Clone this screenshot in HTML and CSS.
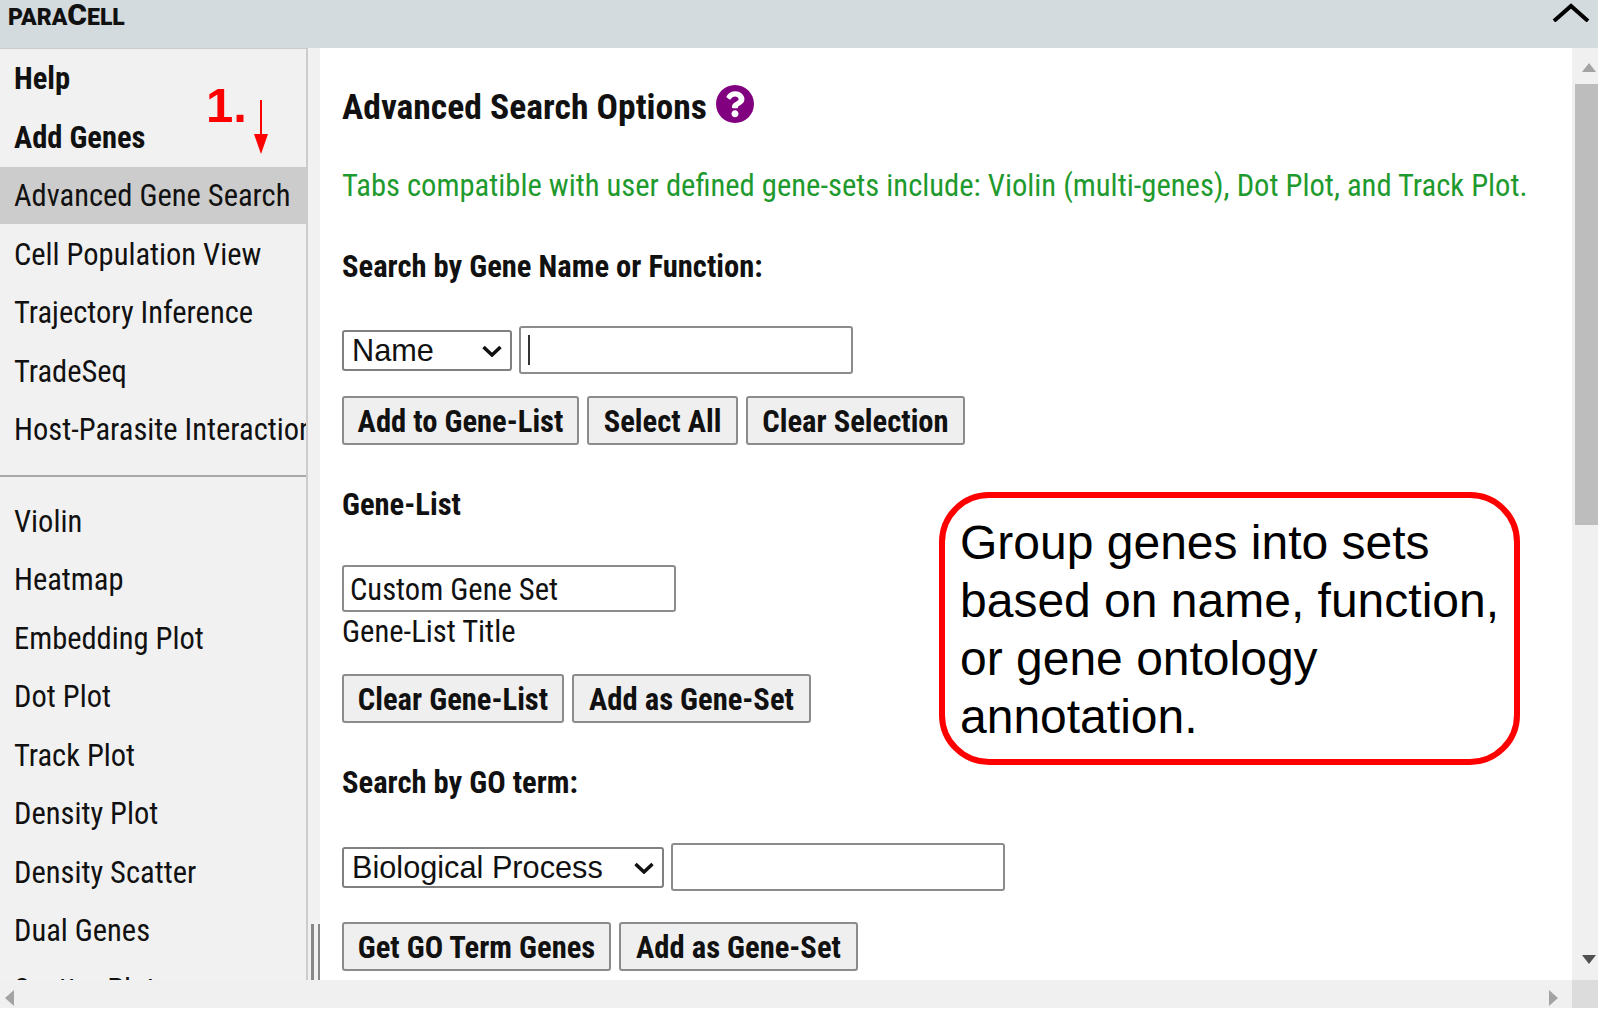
FILE: index.html
```html
<!DOCTYPE html>
<html lang="en">
<head>
    <meta charset="UTF-8">
    <meta name="viewport" content="width=device-width, initial-scale=1.0">
    <title>ParaCell</title>
    <link rel="stylesheet" href="styles.css">
</head>
<body>

    <!-- Top bar -->
    <header class="topbar">
        <div class="logo">PARA<span class="logo-big">C</span>ELL</div>
        <svg class="collapse" width="38" height="20" viewBox="0 0 38 20">
            <path d="M2 19 L19 4 L36 19" fill="none" stroke="#000" stroke-width="4"/>
        </svg>
    </header>

    <div class="workspace">
        <!-- Tab list -->
        <nav class="sidebar">
            <a class="nav-item nav-bold">Help</a>
            <a class="nav-item nav-bold">Add Genes</a>
            <a class="nav-item nav-active">Advanced Gene Search</a>
            <a class="nav-item">Cell Population View</a>
            <a class="nav-item">Trajectory Inference</a>
            <a class="nav-item">TradeSeq</a>
            <a class="nav-item">Host-Parasite Interaction</a>
            <hr class="nav-rule">
            <a class="nav-item">Violin</a>
            <a class="nav-item">Heatmap</a>
            <a class="nav-item">Embedding Plot</a>
            <a class="nav-item">Dot Plot</a>
            <a class="nav-item">Track Plot</a>
            <a class="nav-item">Density Plot</a>
            <a class="nav-item">Density Scatter</a>
            <a class="nav-item">Dual Genes</a>
            <a class="nav-item">Scatter Plot</a>
        </nav>

        <div class="gutter">
            <div class="grip"></div>
        </div>

        <!-- Search options -->
        <main class="content">
            <h2 class="title">Advanced Search Options
                <svg class="help" width="38" height="38" viewBox="8 8 496 496">
                    <path fill="#800080" d="M504 256c0 136.997-111.043 248-248 248S8 392.997 8 256C8 119.083 119.043 8 256 8s248 111.083 248 248zM262.655 90c-54.497 0-89.255 22.957-116.549 63.758-3.536 5.286-2.353 12.415 2.715 16.258l34.699 26.31c5.205 3.947 12.621 3.008 16.665-2.122 17.864-22.658 30.113-35.797 57.303-35.797 20.429 0 45.698 13.148 45.698 32.958 0 14.976-12.363 22.667-32.534 33.976C247.128 238.528 216 254.941 216 296v4c0 6.627 5.373 12 12 12h56c6.627 0 12-5.373 12-12v-1.333c0-28.462 83.186-29.647 83.186-106.667 0-58.002-60.165-102-116.531-102zM256 338c-25.365 0-46 20.635-46 46 0 25.364 20.635 46 46 46s46-20.636 46-46c0-25.365-20.635-46-46-46z"/>
                </svg>
            </h2>
            <p class="note">Tabs compatible with user defined gene-sets include: Violin (multi-genes), Dot Plot, and Track Plot.</p>

            <h3 class="label label-first">Search by Gene Name or Function:</h3>
            <div class="field-row">
                <div class="select select-name">Name<svg class="chevron" width="20" height="12" viewBox="0 0 20 12"><path d="M1.5 2 L10 10 L18.5 2" fill="none" stroke="#111" stroke-width="3.5"/></svg></div>
                <div class="text-input"><span class="caret"></span></div>
            </div>
            <div class="button-row">
                <button class="btn btn-add">Add to Gene-List</button>
                <button class="btn btn-all">Select All</button>
                <button class="btn btn-clear">Clear Selection</button>
            </div>

            <h3 class="label label-list">Gene-List</h3>
            <div class="title-input">Custom Gene Set</div>
            <div class="hint">Gene-List Title</div>
            <div class="button-row button-row-list">
                <button class="btn btn-clearlist">Clear Gene-List</button>
                <button class="btn btn-addset">Add as Gene-Set</button>
            </div>

            <h3 class="label label-go">Search by GO term:</h3>
            <div class="field-row field-row-go">
                <div class="select select-go">Biological Process<svg class="chevron" width="20" height="12" viewBox="0 0 20 12"><path d="M1.5 2 L10 10 L18.5 2" fill="none" stroke="#111" stroke-width="3.5"/></svg></div>
                <div class="text-input"></div>
            </div>
            <div class="button-row button-row-go">
                <button class="btn btn-goterm">Get GO Term Genes</button>
                <button class="btn btn-addgo">Add as Gene-Set</button>
            </div>
        </main>

        <div class="vscroll">
            <span class="arrow arrow-up"></span>
            <div class="vthumb"></div>
            <span class="arrow arrow-down"></span>
        </div>
    </div>

    <div class="hscroll">
        <span class="arrow arrow-left"></span>
        <span class="arrow arrow-right"></span>
        <div class="corner"></div>
    </div>

    <!-- Annotations drawn over the screenshot -->
    <div class="step-num">1.</div>
    <svg class="step-arrow" width="16" height="54" viewBox="0 0 16 54">
        <path d="M8 0 V36" stroke="#f00" stroke-width="2"/>
        <polygon points="1,34 15,34 8,54" fill="#f00"/>
    </svg>
    <div class="callout">Group genes into sets based on name, function, or gene ontology annotation.</div>

</body>
</html>
```

FILE: styles.css
```css
html, body {
    margin: 0;
    height: 1011px;
    overflow: hidden;
    background-color: #fff;
}
body {
    font-family: Roboto, sans-serif;
    font-stretch: condensed;
    color: #111;
    display: flex;
    flex-direction: column;
}
.topbar {
    height: 48px;
    flex: none;
    background-color: #d4dbdf;
    display: flex;
    justify-content: space-between;
    padding: 0 0 0 8px;
}
.logo {
    font-stretch: normal;
    font-weight: 900;
    font-size: 23px;
    line-height: 30px;
    color: #111;
}
.logo-big {
    font-size: 30px;
}
.collapse {
    margin: 2px 0 0 0;
    padding-right: 8px;
}
.workspace {
    flex: none;
    height: 932px;
    display: flex;
    overflow: hidden;
}
.sidebar {
    width: 306px;
    flex: none;
    background-color: #f1f1f1;
    border-top: 1px solid #ccc;
    border-right: 2px solid #ccc;
    box-sizing: content-box;
    padding-top: 1px;
    overflow: hidden;
    white-space: nowrap;
}
.nav-item {
    display: block;
    height: 58.5px;
    line-height: 58.5px;
    padding-left: 14px;
    font-size: 30.5px;
}
.nav-bold {
    font-weight: 700;
}
.nav-active {
    height: 57px;
    margin-bottom: 1.5px;
    background-color: #ccc;
}
.nav-rule {
    border: 0;
    border-top: 2px solid #aaa;
    margin: 15px 0 16px 0;
}
.gutter {
    width: 12px;
    flex: none;
    background-color: #f1f1f1;
    position: relative;
}
.grip {
    position: absolute;
    left: 3px;
    right: 0;
    bottom: 0;
    height: 56px;
    border-left: 3px solid #888;
    border-right: 2px solid #888;
}
.content {
    flex: 1;
    min-width: 0;
    padding: 36px 0 0 22px;
    overflow: hidden;
}
.title {
    margin: 0;
    font-size: 35.6px;
    line-height: 46px;
    font-weight: 700;
    display: flex;
    align-items: flex-start;
    gap: 9px;
}
.help {
    margin-top: 1px;
}
.note {
    margin: 34px 0 0 0;
    font-size: 30.6px;
    line-height: 44px;
    color: #1f9a2e;
    white-space: nowrap;
}
.label {
    margin: 0 0 -1px 0;
    padding-top: 1px;
    font-size: 30.6px;
    line-height: 40px;
    font-weight: 700;
}
.label-first {
    margin-top: 38px;
}
.label-list {
    margin-top: 39px;
}
.label-go {
    margin-top: 39px;
}
.field-row {
    display: flex;
    align-items: center;
    gap: 7px;
    margin-top: 40px;
}
.field-row-go {
    margin-top: 41px;
}
.select {
    box-sizing: border-box;
    height: 41px;
    background-color: #fff;
    border: 2px solid #808080;
    border-radius: 3px;
    padding: 2px 8px 0 8px;
    font-family: "Liberation Sans", sans-serif;
    font-stretch: normal;
    font-size: 30.7px;
    line-height: 36px;
    display: flex;
    align-items: center;
    justify-content: space-between;
}
.select-name {
    width: 170px;
}
.select-go {
    width: 322px;
}
.text-input {
    box-sizing: border-box;
    width: 334px;
    height: 48px;
    background-color: #fff;
    border: 2px solid #8c8c8c;
    border-radius: 3px;
    display: flex;
    align-items: center;
    padding-left: 7px;
}
.caret {
    width: 2px;
    height: 30px;
    background-color: #333;
}
.button-row {
    display: flex;
    gap: 8px;
    margin-top: 22px;
}
.button-row-list {
    margin-top: 21px;
}
.button-row-go {
    margin-top: 31px;
}
.btn {
    box-sizing: border-box;
    height: 49px;
    background-color: #efefef;
    border: 2px solid #8c8c8c;
    border-radius: 3px;
    padding: 1px 0 0 0;
    font-family: inherit;
    font-stretch: inherit;
    font-size: 30.6px;
    font-weight: 700;
    color: #111;
    text-align: center;
}
.btn-add { width: 237px; }
.btn-all { width: 151px; }
.btn-clear { width: 219px; }
.btn-clearlist { width: 222px; }
.btn-addset { width: 239px; }
.btn-goterm { width: 269px; }
.btn-addgo { width: 239px; }
.title-input {
    box-sizing: border-box;
    width: 334px;
    height: 47px;
    margin-top: 41px;
    background-color: #fff;
    border: 2px solid #8c8c8c;
    border-radius: 3px;
    padding-left: 6px;
    font-size: 30.6px;
    line-height: 45px;
}
.hint {
    font-size: 30.6px;
    line-height: 42px;
    margin-top: -1px;
}
.vscroll {
    width: 26px;
    flex: none;
    background-color: #f0f0f0;
    position: relative;
}
.vthumb {
    position: absolute;
    top: 36px;
    left: 3px;
    right: 0;
    height: 441px;
    background-color: #bdbdbd;
}
.arrow {
    position: absolute;
    width: 0;
    height: 0;
}
.arrow-up {
    top: 15px;
    left: 10px;
    border-left: 7px solid transparent;
    border-right: 7px solid transparent;
    border-bottom: 9px solid #a3a3a3;
}
.arrow-down {
    top: 907px;
    left: 10px;
    border-left: 7px solid transparent;
    border-right: 7px solid transparent;
    border-top: 9px solid #505050;
}
.hscroll {
    height: 28px;
    flex: none;
    background-color: #f0f0f0;
    position: relative;
}
.arrow-left {
    top: 10px;
    left: 5px;
    border-top: 8px solid transparent;
    border-bottom: 8px solid transparent;
    border-right: 9px solid #a3a3a3;
}
.arrow-right {
    top: 10px;
    right: 40px;
    border-top: 8px solid transparent;
    border-bottom: 8px solid transparent;
    border-left: 9px solid #a3a3a3;
}
.corner {
    position: absolute;
    right: 0;
    top: 0;
    width: 26px;
    height: 28px;
    background-color: #dcdcdc;
}
.step-num {
    position: absolute;
    left: 206px;
    top: 77px;
    font-family: "Liberation Sans", sans-serif;
    font-stretch: normal;
    font-weight: 700;
    font-size: 49px;
    line-height: 56px;
    color: #f00;
}
.step-arrow {
    position: absolute;
    left: 253px;
    top: 100px;
}
.callout {
    position: absolute;
    left: 939px;
    top: 492px;
    width: 581px;
    height: 273px;
    box-sizing: border-box;
    background-color: #fff;
    border: 6px solid #f00;
    border-radius: 50px;
    padding: 16px 0 0 15px;
    font-family: "Liberation Sans", sans-serif;
    font-stretch: normal;
    font-size: 48px;
    line-height: 58px;
    color: #000;
}
```
